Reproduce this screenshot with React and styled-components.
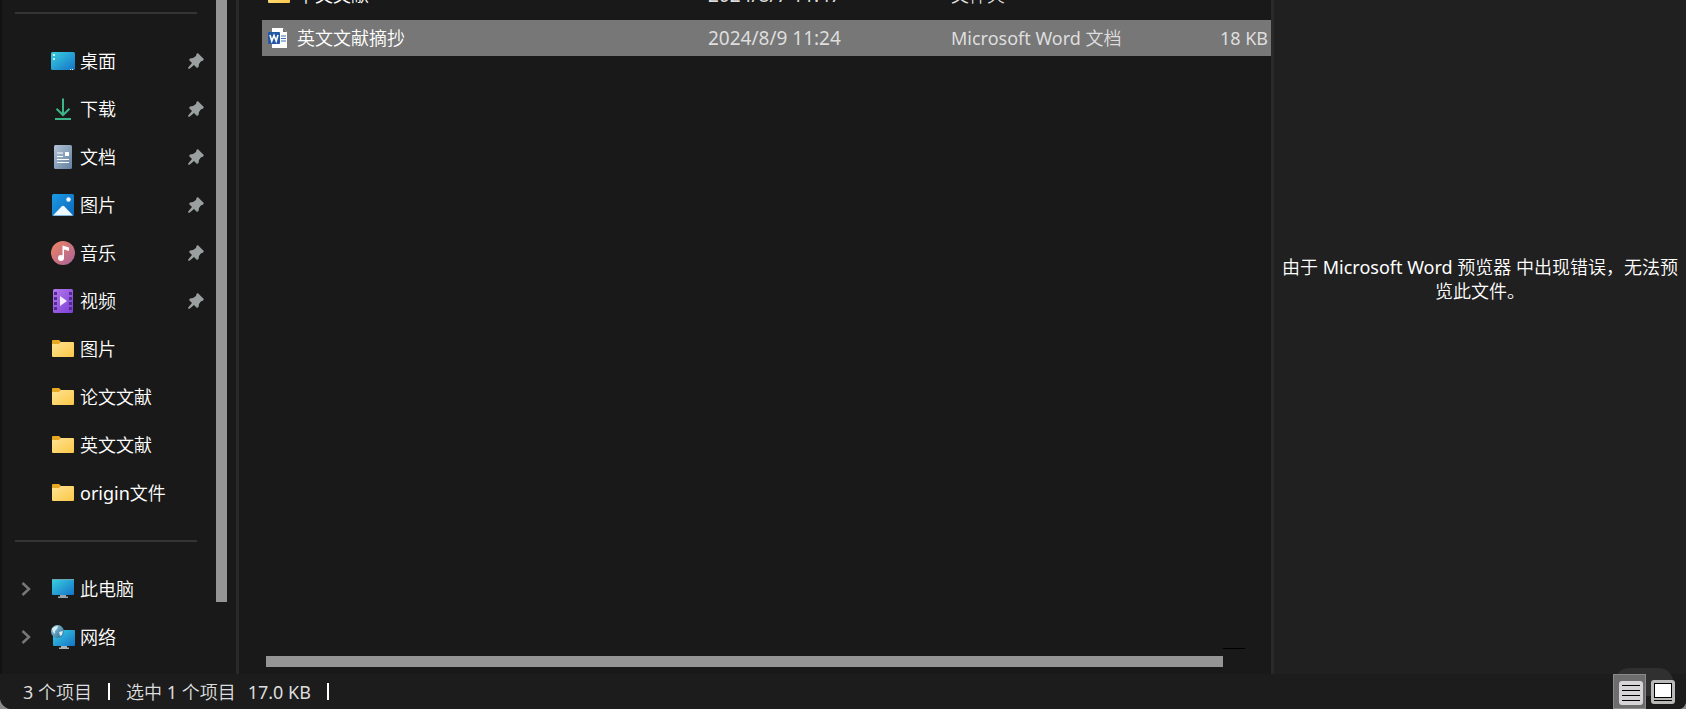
import React from "react";
import styled, { createGlobalStyle, css } from "styled-components";

const quickItems = [
  { id: 1, name: "桌面", icon: "desktop", pinned: true },
  { id: 2, name: "下载", icon: "download", pinned: true },
  { id: 3, name: "文档", icon: "document", pinned: true },
  { id: 4, name: "图片", icon: "picture", pinned: true },
  { id: 5, name: "音乐", icon: "music", pinned: true },
  { id: 6, name: "视频", icon: "video", pinned: true },
  { id: 7, name: "图片", icon: "folder" },
  { id: 8, name: "论文文献", icon: "folder" },
  { id: 9, name: "英文文献", icon: "folder" },
  { id: 10, name: "origin文件", icon: "folder" },
];

const deviceItems = [
  { id: 11, name: "此电脑", icon: "computer" },
  { id: 12, name: "网络", icon: "network" },
];

const files = [
  {
    id: 1,
    name: "中文文献",
    date: "2024/8/7 11:47",
    type: "文件夹",
    size: "",
    icon: "folder",
  },
  {
    id: 2,
    name: "英文文献摘抄",
    date: "2024/8/9 11:24",
    type: "Microsoft Word 文档",
    size: "18 KB",
    icon: "word",
    selected: true,
  },
];

const icons = {
  desktop: (
    <>
      <rect y="3" width="24" height="18" rx="1.5" fill="url(#screen)" />
      <path d="M2 5h2v2H2zM2 9h2v2H2z" fill="#c9f6fb" />
      <path d="M19 20h1v1h-1zM21 20h1v1h-1z" fill="#fff" />
    </>
  ),
  download: (
    <path
      d="M12 1.5V18M5.500 11.800 12 18l6.500-6.200M4 22h16"
      fill="none"
      stroke="#3eb489"
      strokeWidth="2"
    />
  ),
  document: (
    <>
      <rect x="3" width="18" height="24" rx="1.500" fill="url(#paper)" />
      <path d="M6 8h6M6 11.500h6M6 14.500h12M6 17.500h12" stroke="#fff" strokeWidth="1.200" />
      <rect x="14" y="7" width="4" height="4" fill="#fff" />
    </>
  ),
  picture: (
    <>
      <rect x="1" y="1" width="22" height="22" rx="1.500" fill="url(#photo)" />
      <path d="M2 22.500 10.800 13.300a1.700 1.700 0 0 1 2.400 0L22 22.500z" fill="#eef8ff" />
      <circle cx="17.500" cy="6.500" r="2.200" fill="#f4fbff" />
    </>
  ),
  music: (
    <>
      <circle cx="12" cy="12" r="12" fill="url(#disc)" />
      <path d="M11.500 4.500 18 6.500v3.500l-5-1.500v9h-1.500z" fill="#fff" />
      <circle cx="10" cy="17" r="3" fill="#fff" />
    </>
  ),
  video: (
    <>
      <rect x="2" width="20" height="24" rx="1.500" fill="url(#film)" />
      <path
        d="M3 3h3v3H3zM3 8h3v3H3zM3 13h3v3H3zM3 18h3v3H3zM18 3h3v3h-3zM18 8h3v3h-3zM18 13h3v3h-3zM18 18h3v3h-3z"
        fill="#512a93"
      />
      <path d="M9 7v10l7-5z" fill="#f6ecff" />
    </>
  ),
  folder: (
    <>
      <path d="M1 4a1 1 0 0 1 1-1h6l2 2-2 4H1z" fill="#e8a824" />
      <path d="M1 7h6.500l2.500-2h12a1 1 0 0 1 1 1v13a1 1 0 0 1-1 1H2a1 1 0 0 1-1-1z" fill="url(#folder)" />
    </>
  ),
  computer: (
    <>
      <rect x="1" y="2" width="22" height="16" rx="1" fill="url(#screen)" />
      <path d="M1 2.500h22" stroke="#6aa6b4" />
      <path d="M9 18h6v1.500h2V21H7v-1.500h2z" fill="#9aa5aa" />
    </>
  ),
  network: (
    <>
      <rect x="2" y="5" width="22" height="16" rx="1" fill="url(#screen)" />
      <path d="M10 21h6v1.500h2V24H8v-1.500h2z" fill="#a9b4ba" />
      <circle cx="6.500" cy="6.500" r="6.500" fill="url(#globe)" />
      <path d="M1 3.500q3-3 6-2.500l-1 3-2 2v3l-2-2zM8 7l4-1-1 4-2 1z" fill="#d6edf5" />
    </>
  ),
  word: (
    <>
      <path d="M5 2h11l4 4v16H5z" fill="#fff" />
      <path d="M16 2l4 4h-4z" fill="#6d6d6d" />
      <path d="M14 10h5M14 12.500h5M14 15h5" stroke="#3c6fb5" />
      <rect x="1" y="6" width="12" height="12" rx="1" fill="#2458a6" />
      <path d="M3 9 4.800 15l2.200-5.500L9.200 15 11 9" fill="none" stroke="#fff" strokeWidth="1.600" />
    </>
  ),
};

const Icon = ({ name }) => (
  <IconSvg viewBox="0 0 24 24" aria-hidden="true">
    {icons[name]}
  </IconSvg>
);

const Gradient = ({ id, from, to }) => (
  <linearGradient id={id} x1="0" y1="0" x2="1" y2="1">
    <stop offset="0" stopColor={from} />
    <stop offset="1" stopColor={to} />
  </linearGradient>
);

const NavItem = ({ item, expandable }) => (
  <li>
    <NavLink href="#">
      <Arrow>
        {expandable && (
          <svg width="10" height="14" viewBox="0 0 10 14" aria-hidden="true">
            <path d="M1.500 1 8 7l-6.500 6" fill="none" stroke="#777" strokeWidth="2.500" />
          </svg>
        )}
      </Arrow>
      <Icon name={item.icon} />
      <NavName>{item.name}</NavName>
      {item.pinned && (
        <svg width="16" height="16" viewBox="0 0 16 16" aria-hidden="true">
          <path
            d="M9.800 0 15.800 6 15 7.800 13 8.300 11 11l-.5 3L9 15 6 12l-4.500 3.800L.2 15.800.2 14.500 4 10 1 7 2 5.500 5 5l3-2 .5-2z"
            fill="#9aa0a0"
          />
        </svg>
      )}
    </NavLink>
  </li>
);

const App = () => {
  return (
    <Window>
      <GlobalStyle />
      <Defs aria-hidden="true">
        <Gradient id="screen" from="#39cfe0" to="#1573c8" />
        <Gradient id="paper" from="#b4c4d8" to="#62809f" />
        <Gradient id="photo" from="#1b9be6" to="#0b67ba" />
        <Gradient id="disc" from="#f08560" to="#a8619c" />
        <Gradient id="film" from="#b578ec" to="#7c3fd6" />
        <Gradient id="folder" from="#ffe394" to="#fbc748" />
        <Gradient id="globe" from="#9cd3e8" to="#24638c" />
      </Defs>
      <Body>
        <Sidebar>
          <Nav>
            <Line />
            <ul>
              {quickItems.map((item) => (
                <NavItem key={item.id} item={item} />
              ))}
            </ul>
            <Line />
            <ul>
              {deviceItems.map((item) => (
                <NavItem key={item.id} item={item} expandable />
              ))}
            </ul>
          </Nav>
          <ScrollY />
        </Sidebar>
        <Main>
          <FileTable>
            <colgroup>
              <col />
              <DateCol />
              <TypeCol />
              <SizeCol />
            </colgroup>
            <tbody>
              {files.map((file) => (
                <FileRow key={file.id} $selected={file.selected}>
                  <td>
                    <FileName>
                      <Icon name={file.icon} />
                      {file.name}
                    </FileName>
                  </td>
                  <DateCell>{file.date}</DateCell>
                  <td>{file.type}</td>
                  <td>{file.size}</td>
                </FileRow>
              ))}
            </tbody>
          </FileTable>
          <ScrollX>
            <ScrollThumb />
            <ScrollEnd />
          </ScrollX>
        </Main>
        <Preview>
          <p>由于 Microsoft Word 预览器 中出现错误，无法预览此文件。</p>
        </Preview>
      </Body>
      <StatusBar>
        <span>3 个项目</span>
        <Bar />
        <Selected>
          <span>选中 1 个项目</span>
          <span>17.0 KB</span>
        </Selected>
        <Bar />
        <Views>
          <Badge />
          <ViewButton type="button" aria-label="详细信息" $active>
            <svg width="24" height="24" viewBox="0 0 24 24">
              <rect width="24" height="24" rx="3" fill="#d6d4d6" />
              <path d="M3 4.500h18M3 9.500h18M3 14.500h18M3 19.500h18" stroke="#000" />
            </svg>
          </ViewButton>
          <ViewButton type="button" aria-label="大图标">
            <svg width="24" height="24" viewBox="0 0 24 24">
              <rect width="24" height="24" rx="3" fill="#b9bab8" />
              <rect x="3.500" y="3.500" width="17" height="14" fill="#fff" stroke="#000" />
              <path d="M3 20.500h18" stroke="#000" />
            </svg>
          </ViewButton>
        </Views>
      </StatusBar>
    </Window>
  );
};
export default App;

const GlobalStyle = createGlobalStyle`
  * {
    box-sizing: border-box;
  }
  body {
    margin: 0;
    background-color: #8a8a8a;
    color: #fff;
    font-family: "Noto Sans", "Noto Sans CJK SC DemiLight", "Noto Sans CJK SC", sans-serif;
    font-size: 18px;
    line-height: 24px;
  }
  ul, p {
    margin: 0;
    padding: 0;
    list-style: none;
  }
`;

const Window = styled.div`
  display: flex;
  flex-direction: column;
  height: 100vh;
  overflow: hidden;
  background-color: #191919;
  border-radius: 0 0 8px 12px;
`;

const Defs = styled.svg`
  position: absolute;
  width: 0;
  height: 0;
`;

const Body = styled.div`
  display: flex;
  flex: 1;
  min-height: 0;
`;

const Sidebar = styled.aside`
  display: flex;
  width: 239px;
  padding-right: 9px;
  overflow: hidden;
  border-left: 2px solid #121212;
  border-right: 3px solid #292929;
`;

const Nav = styled.nav`
  flex: 1;
  margin-top: -11px;
`;

const Line = styled.hr`
  height: 2px;
  margin: 23px 19px 23px 13px;
  border: none;
  background-color: #353535;
`;

const ScrollY = styled.div`
  width: 11px;
  height: 602px;
  background-color: #959595;
`;

const NavLink = styled.a`
  display: flex;
  align-items: center;
  height: 48px;
  padding: 0 12px 0 19px;
  color: #fff;
  text-decoration: none;
`;

const Arrow = styled.span`
  display: flex;
  width: 30px;
`;

const NavName = styled.span`
  flex: 1;
  margin-left: 5px;
`;

const IconSvg = styled.svg`
  flex: none;
  width: 24px;
  height: 24px;
`;

const Main = styled.main`
  display: flex;
  flex: 1;
  flex-direction: column;
  justify-content: space-between;
  min-width: 0;
  padding: 0 0 7px 23px;
`;

const FileTable = styled.table`
  width: 100%;
  margin-top: -30px;
  table-layout: fixed;
  border-spacing: 0 7px;
`;

const DateCol = styled.col`
  width: 243px;
`;

const TypeCol = styled.col`
  width: 220px;
`;

const SizeCol = styled.col`
  width: 100px;
`;

const FileRow = styled.tr`
  height: 36px;
  color: #dedede;
  ${({ $selected }) =>
    $selected &&
    css`
      background-color: #777;
    `}
  td {
    padding: 0;
    white-space: nowrap;
  }
  td:last-child {
    padding-right: 3px;
    text-align: right;
  }
`;

const DateCell = styled.td`
  font-size: 19px;
`;

const FileName = styled.div`
  display: flex;
  align-items: center;
  gap: 6px;
  padding-left: 5px;
  color: #fff;
`;

const ScrollX = styled.div`
  display: flex;
  height: 19px;
  padding: 0 26px 0 4px;
`;

const ScrollThumb = styled.div`
  flex: 1;
  align-self: flex-end;
  height: 11px;
  background-color: #959595;
`;

const ScrollEnd = styled.div`
  width: 22px;
  height: 1px;
  background-color: #000;
`;

const Preview = styled.section`
  width: 415px;
  padding: 255px 4px 0;
  border-left: 3px solid #292929;
  background-color: #202020;
  text-align: center;
`;

const StatusBar = styled.footer`
  display: flex;
  align-items: center;
  height: 35px;
  padding: 0 7px 0 23px;
  background-color: #1c1c1c;
  color: #dedede;
`;

const Bar = styled.span`
  width: 2px;
  height: 17px;
  margin: 0 16px;
  background-color: #fff;
`;

const Selected = styled.div`
  display: flex;
  gap: 12px;
`;

const Views = styled.div`
  display: flex;
  position: relative;
  height: 35px;
  margin-left: auto;
`;

const Badge = styled.span`
  position: absolute;
  top: -6px;
  left: 2px;
  width: 58px;
  height: 28px;
  border-radius: 14px;
  background-color: #303030;
`;

const ViewButton = styled.button`
  position: relative;
  display: flex;
  align-items: center;
  justify-content: center;
  width: 33px;
  padding: 0;
  border: none;
  background: none;
  ${({ $active }) =>
    $active &&
    css`
      padding: 2px 0 0 3px;
      border: 1px solid #898989;
      background-color: #6d6d6d;
    `}
`;
